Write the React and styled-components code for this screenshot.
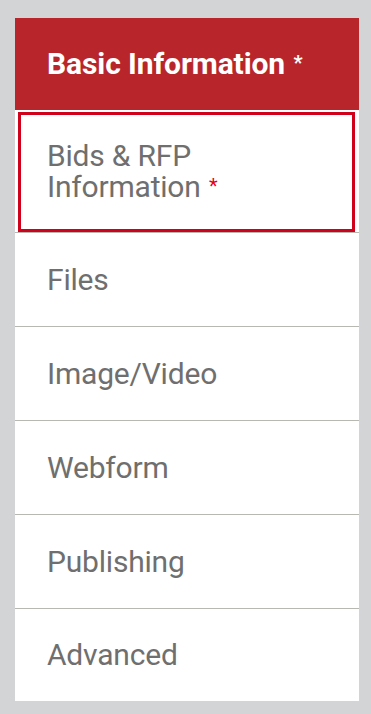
import React from "react";
import styled, { createGlobalStyle } from "styled-components";

const GlobalStyle = createGlobalStyle`
  html, body {
    margin: 0;
    padding: 0;
    background: #d3d4d6;
  }
  body {
    font-family: Roboto, "Liberation Sans", Arial, sans-serif;
  }
`;

const Page = styled.div`
  padding: 18px 12px 13px 15px;
`;

const Nav = styled.nav`
  display: flex;
  flex-direction: column;
  background: #fff;
`;

const Header = styled.div`
  display: flex;
  align-items: center;
  height: 92px;
  padding: 0 32px 2px;
  box-sizing: border-box;
  background: #b8262c;
  color: #fff;
  font-size: 30px;
  font-weight: 700;
  line-height: 31px;
  letter-spacing: -0.1px;
`;

const Item = styled.a`
  position: relative;
  display: flex;
  align-items: center;
  height: ${({ $tall, $last }) => ($tall ? "123px" : $last ? "92px" : "94px")};
  padding: 0 32px;
  box-sizing: border-box;
  border-bottom: ${({ $last }) => ($last ? "none" : "1px solid #b8b8b3")};
  color: #6f6f6f;
  font-size: 30px;
  line-height: 30px;
  letter-spacing: -0.2px;
  text-decoration: none;
  cursor: pointer;

  &::after {
    content: "";
    display: ${({ $focused }) => ($focused ? "block" : "none")};
    position: absolute;
    top: 2px;
    right: 4px;
    bottom: 0;
    left: 3px;
    border: 3.5px solid #d0021b;
    pointer-events: none;
  }
`;

const Required = styled.span`
  display: inline-block;
  margin-left: 1px;
  font-size: 20px;
  vertical-align: 4px;
  color: ${({ $light }) => ($light ? "#fff" : "#e6001a")};
`;

const items = [
  { label: "Bids & RFP", label2: "Information", required: true, focused: true },
  { label: "Files" },
  { label: "Image/Video" },
  { label: "Webform" },
  { label: "Publishing" },
  { label: "Advanced" },
];

export default function App() {
  return (
    <>
      <GlobalStyle />
      <Page>
        <Nav>
          <Header>
            <span>
              Basic Information <Required $light>*</Required>
            </span>
          </Header>
          {items.map((item, i) => (
            <Item
              key={item.label}
              $tall={!!item.label2}
              $focused={item.focused}
              $last={i === items.length - 1}
            >
              <span>
                {item.label}
                {item.label2 && (
                  <>
                    <br />
                    {item.label2}
                  </>
                )}
                {item.required && (
                  <>
                    {" "}
                    <Required>*</Required>
                  </>
                )}
              </span>
            </Item>
          ))}
        </Nav>
      </Page>
    </>
  );
}
